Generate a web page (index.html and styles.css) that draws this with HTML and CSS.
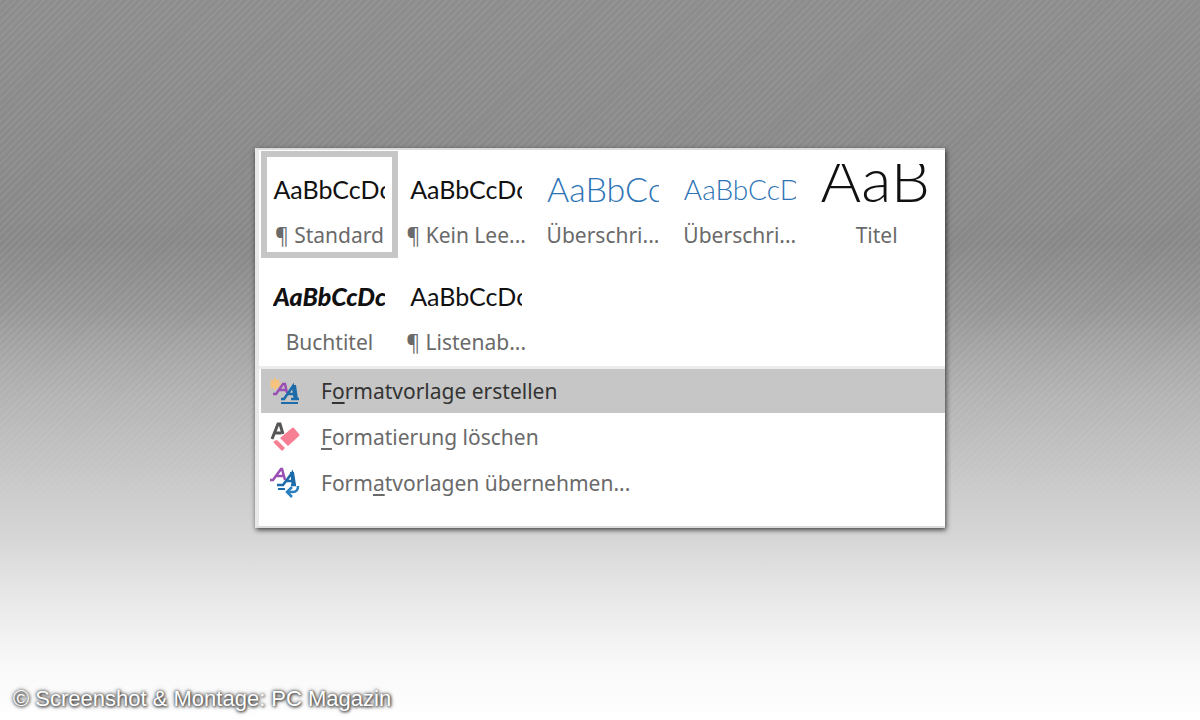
FILE: index.html
```html
<!DOCTYPE html>
<html lang="de">
<head>
    <meta charset="UTF-8">
    <meta name="viewport" content="width=device-width, initial-scale=1.0">
    <title>Formatvorlagen</title>
    <link rel="stylesheet" href="styles.css">
</head>
<body>

<main class="panel">
    <!-- Style gallery -->
    <div class="gallery">
        <button class="style selected" type="button">
            <span class="preview">AaBbCcDc</span>
            <span class="name">¶ Standard</span>
        </button>
        <button class="style" type="button">
            <span class="preview">AaBbCcDc</span>
            <span class="name">¶ Kein Lee...</span>
        </button>
        <button class="style" type="button">
            <span class="preview heading1">AaBbCc</span>
            <span class="name">Überschri...</span>
        </button>
        <button class="style" type="button">
            <span class="preview heading2">AaBbCcD</span>
            <span class="name">Überschri...</span>
        </button>
        <button class="style" type="button">
            <span class="preview title">AaB</span>
            <span class="name">Titel</span>
        </button>
        <button class="style" type="button">
            <span class="preview book">AaBbCcDc</span>
            <span class="name">Buchtitel</span>
        </button>
        <button class="style" type="button">
            <span class="preview">AaBbCcDc</span>
            <span class="name">¶ Listenab...</span>
        </button>
    </div>

    <!-- Commands -->
    <div class="menu">
        <button class="command active" type="button">
            <svg class="icon" viewBox="0 0 32 32" aria-hidden="true">
                <path d="M6 2l1.500 3.500L11 4 9.500 7.500 13 9 9.500 10.500 11 14 7.500 12.500 6 16 4.500 12.500 1 14 2.500 10.500 0 9 2.500 7.500 1 4l3.500 1.500z" fill="#f7c37c"/>
                <path d="M4 19h3l7-10h2l2 9M9 15h8" fill="none" stroke="#9a4fb5" stroke-width="2.500"/>
                <path d="M12 24h4M15 24l9-13 2 13M22 24h8M18 19h7" fill="none" stroke="#1d6ba8" stroke-width="2.500"/>
                <path d="M23 10h4l2 14h-4z" fill="#1d6ba8"/>
                <path d="M12 28h17" stroke="#1d6ba8" stroke-width="2"/>
            </svg>
            <span>F<u>o</u>rmatvorlage erstellen</span>
        </button>
        <button class="command" type="button">
            <svg class="icon" viewBox="0 0 32 32" aria-hidden="true">
                <path d="M3 18L9 3h2l3 10M5 12h7" fill="none" stroke="#555" stroke-width="3"/>
                <path d="M23 7q1-1 2 0l5 6q1 1 0 2L19 25l-8-8z" fill="#f77f93"/>
                <path d="M8 19l8 8-3 3-8-8q-1-1 0-2z" fill="#f77f93"/>
            </svg>
            <span><u>F</u>ormatierung löschen</span>
        </button>
        <button class="command" type="button">
            <svg class="icon" viewBox="0 0 32 32" aria-hidden="true">
                <path d="M1 13h3L12 2h1l3 11M6 9h9" fill="none" stroke="#9a4fb5" stroke-width="2.500"/>
                <path d="M8 18h6l9-12 1 12M17 14h7M22 18h5" fill="none" stroke="#1d6ba8" stroke-width="2.500"/>
                <path d="M21 5h4l2 13h-4z" fill="#1d6ba8"/>
                <path d="M9 22h7" stroke="#1d6ba8" stroke-width="2"/>
                <path d="M23 20l-5 5 5 5M18 25h6q5 0 5-6" fill="none" stroke="#2a7fc0" stroke-width="2.500"/>
            </svg>
            <span>Form<u>a</u>tvorlagen übernehmen...</span>
        </button>
    </div>
</main>

<footer class="credit">© Screenshot &amp; Montage: PC Magazin</footer>

</body>
</html>
```
FILE: styles.css
```css
* {
    box-sizing: border-box;
}

/* grey stripes fading out into plain white at the bottom */
body {
    display: flex;
    flex-direction: column;
    align-items: center;
    justify-content: space-between;
    min-height: 100vh;
    margin: 0;
    padding: 148px 0 7px;
    font-family: "Noto Sans", "Open Sans", sans-serif;
    background:
        linear-gradient(rgba(215, 215, 215, 0) 43%, #d7d7d7 75%, #e8e8e8 83%, #f8f8f8 92%, #fff 100%),
        repeating-linear-gradient(135deg, rgba(255, 255, 255, 0.04) 0 2px, rgba(0, 0, 0, 0.02) 2px 5px),
        linear-gradient(#909090 0, #8b8b8b 34%, #999 43%, #a1a1a1 55%, #a5a5a5 100%);
}

.panel {
    width: 57.5%;
    padding-bottom: 21px;
    background-color: white;
    border-top: 2px solid #dcdcdc;
    border-left: 4px solid #e8e8e8;
    border-bottom: 2px solid #dcdcdc;
    box-shadow: 1px 2px 5px rgba(0, 0, 0, 0.7);
}

button {
    margin: 0;
    border: none;
    background: none;
    color: #6a6a6a;
    font-family: inherit;
    font-size: 21px;
    cursor: pointer;
}

.gallery {
    display: grid;
    grid-template-columns: repeat(5, 1fr);
    padding: 1px 0 1px 2px;
    border-bottom: 3px solid #ececec;
}

.style {
    display: flex;
    flex-direction: column;
    align-items: center;
    height: 107px;
    padding: 7px 0 0;
    border: 6px solid transparent;
}

.style.selected {
    border-color: #c6c6c6;
}

.preview {
    width: 112px;
    height: 56px;
    overflow: hidden;
    color: #111;
    font-family: Lato, sans-serif;
    font-size: 25px;
    line-height: 50px;
    text-align: left;
    white-space: nowrap;
}

.heading1 {
    color: #2e74b5;
    font-size: 34px;
    font-weight: 300;
}

.heading2 {
    color: #2e74b5;
    font-size: 28px;
    font-weight: 300;
}

.title {
    font-size: 62px;
    font-weight: 300;
    line-height: 28px;
}

.book {
    font-style: italic;
    font-weight: 900;
}

.name {
    line-height: 30px;
    white-space: nowrap;
}

.menu {
    display: flex;
    flex-direction: column;
    gap: 2px;
    padding-left: 2px;
}

.command {
    display: flex;
    align-items: center;
    gap: 20px;
    height: 44px;
    padding: 0 8px;
    text-align: left;
}

.command.active {
    background-color: #c6c6c6;
    color: #333;
}

.command u {
    text-underline-offset: 3px;
}

.icon {
    width: 32px;
    height: 32px;
}

.credit {
    align-self: flex-start;
    padding-left: 13px;
    color: white;
    font-family: "Liberation Sans", Arial, sans-serif;
    font-size: 22px;
    line-height: 28px;
    text-shadow: 0 0 3px #444, 1px 1px 3px #444, 0 0 5px #777;
}
```
